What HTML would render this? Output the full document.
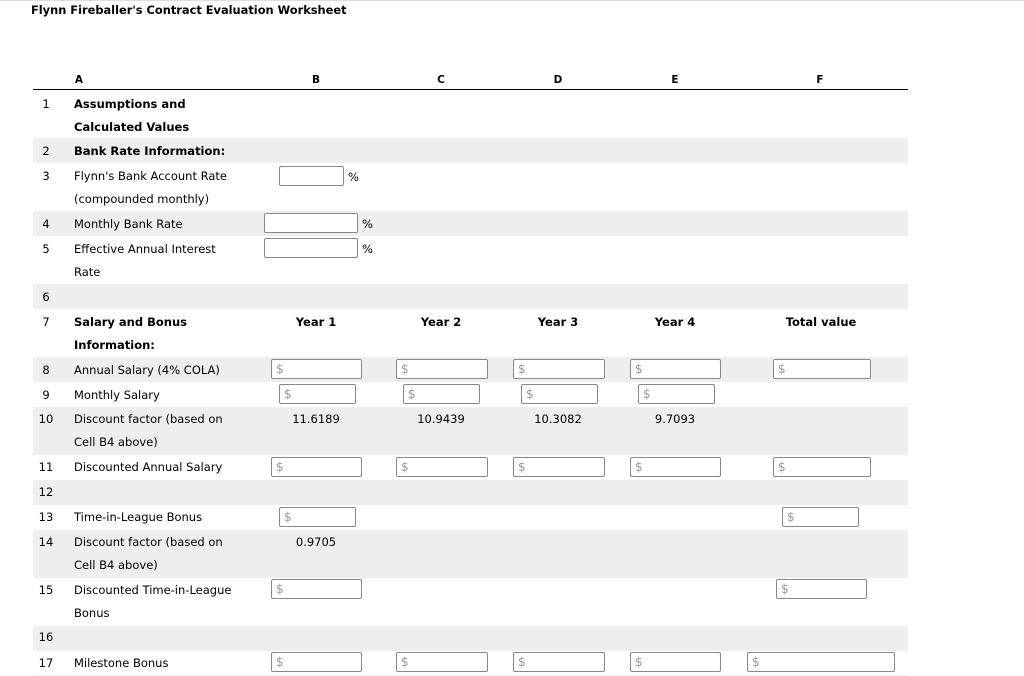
<!DOCTYPE html>
<html><head><meta charset="utf-8"><style>
*{margin:0;padding:0;box-sizing:border-box}
body{width:1024px;height:676px;background:#fff;position:relative;overflow:hidden;font-family:"DejaVu Sans","Liberation Sans",sans-serif;font-size:11.5px;color:#000}
.a{position:absolute;white-space:nowrap;line-height:14px;margin-top:1px}
.b{font-weight:bold}
.g{position:absolute;left:33px;width:875px;background:#eee}
.in{position:absolute;height:20px;border:1px solid #888;border-radius:2px;background:#fff;color:#999;font-size:12px;line-height:18px;padding-left:4px}
.c{text-align:center;transform:translateX(-50%)}
.h{font-size:10.5px}
</style></head><body>
<div style="position:absolute;left:0;top:0;width:1024px;height:1px;background:#ddd"></div>
<div class="a b" style="left:31px;top:2px;font-size:11.4px">Flynn Fireballer's Contract Evaluation Worksheet</div>

<div class="a b c h" style="left:79px;top:72px">A</div>
<div class="a b c h" style="left:316px;top:72px">B</div>
<div class="a b c h" style="left:441px;top:72px">C</div>
<div class="a b c h" style="left:558px;top:72px">D</div>
<div class="a b c h" style="left:675px;top:72px">E</div>
<div class="a b c h" style="left:820px;top:72px">F</div>
<div style="position:absolute;left:33px;top:89px;width:875px;height:1px;background:#000"></div>

<div class="g" style="top:138px;height:25px"></div>
<div class="g" style="top:211px;height:25px"></div>
<div class="g" style="top:284px;height:25px"></div>
<div class="g" style="top:357px;height:25px"></div>
<div class="g" style="top:407px;height:48px"></div>
<div class="g" style="top:480px;height:25px"></div>
<div class="g" style="top:530px;height:48px"></div>
<div class="g" style="top:626px;height:25px"></div>

<div class="a c" style="left:46px;top:96px">1</div>
<div class="a b" style="left:74px;top:96px">Assumptions and</div>
<div class="a b" style="left:74px;top:119px">Calculated Values</div>
<div class="a c" style="left:46px;top:143px">2</div>
<div class="a b" style="left:74px;top:143px">Bank Rate Information:</div>
<div class="a c" style="left:46px;top:168px">3</div>
<div class="a" style="left:74px;top:168px">Flynn's Bank Account Rate</div>
<div class="a" style="left:74px;top:191px">(compounded monthly)</div>
<div class="in" style="left:279px;top:166px;width:65px"></div><div class="a" style="left:348px;top:169px">%</div>
<div class="a c" style="left:46px;top:216px">4</div>
<div class="a" style="left:74px;top:216px">Monthly Bank Rate</div>
<div class="in" style="left:264px;top:213px;width:94px"></div><div class="a" style="left:362px;top:216px">%</div>
<div class="a c" style="left:46px;top:241px">5</div>
<div class="a" style="left:74px;top:241px">Effective Annual Interest</div>
<div class="a" style="left:74px;top:264px">Rate</div>
<div class="in" style="left:264px;top:238px;width:94px"></div><div class="a" style="left:362px;top:241px">%</div>
<div class="a c" style="left:46px;top:289px">6</div>
<div class="a c" style="left:46px;top:314px">7</div>
<div class="a b" style="left:74px;top:314px">Salary and Bonus</div>
<div class="a b" style="left:74px;top:337px">Information:</div>
<div class="a b c" style="left:316px;top:314px">Year 1</div>
<div class="a b c" style="left:441px;top:314px">Year 2</div>
<div class="a b c" style="left:558px;top:314px">Year 3</div>
<div class="a b c" style="left:675px;top:314px">Year 4</div>
<div class="a b c" style="left:821px;top:314px">Total value</div>

<div class="a c" style="left:46px;top:362px">8</div>
<div class="a" style="left:74px;top:362px">Annual Salary (4% COLA)</div>
<div class="in" style="left:271px;top:359px;width:91px">$</div>
<div class="in" style="left:396px;top:359px;width:92px">$</div>
<div class="in" style="left:513px;top:359px;width:92px">$</div>
<div class="in" style="left:630px;top:359px;width:91px">$</div>
<div class="in" style="left:773px;top:359px;width:98px">$</div>

<div class="a c" style="left:46px;top:387px">9</div>
<div class="a" style="left:74px;top:387px">Monthly Salary</div>
<div class="in" style="left:279px;top:384px;width:77px">$</div>
<div class="in" style="left:403px;top:384px;width:77px">$</div>
<div class="in" style="left:521px;top:384px;width:77px">$</div>
<div class="in" style="left:638px;top:384px;width:77px">$</div>

<div class="a c" style="left:46px;top:411px">10</div>
<div class="a" style="left:74px;top:411px">Discount factor (based on</div>
<div class="a" style="left:74px;top:434px">Cell B4 above)</div>
<div class="a c" style="left:316px;top:411px">11.6189</div>
<div class="a c" style="left:441px;top:411px">10.9439</div>
<div class="a c" style="left:558px;top:411px">10.3082</div>
<div class="a c" style="left:675px;top:411px">9.7093</div>

<div class="a c" style="left:46px;top:459px">11</div>
<div class="a" style="left:74px;top:459px">Discounted Annual Salary</div>
<div class="in" style="left:271px;top:457px;width:91px">$</div>
<div class="in" style="left:396px;top:457px;width:92px">$</div>
<div class="in" style="left:513px;top:457px;width:92px">$</div>
<div class="in" style="left:630px;top:457px;width:91px">$</div>
<div class="in" style="left:773px;top:457px;width:98px">$</div>

<div class="a c" style="left:46px;top:484px">12</div>
<div class="a c" style="left:46px;top:509px">13</div>
<div class="a" style="left:74px;top:509px">Time-in-League Bonus</div>
<div class="in" style="left:279px;top:507px;width:77px">$</div>
<div class="in" style="left:782px;top:507px;width:77px">$</div>

<div class="a c" style="left:46px;top:534px">14</div>
<div class="a" style="left:74px;top:534px">Discount factor (based on</div>
<div class="a" style="left:74px;top:557px">Cell B4 above)</div>
<div class="a c" style="left:316px;top:534px">0.9705</div>

<div class="a c" style="left:46px;top:582px">15</div>
<div class="a" style="left:74px;top:582px">Discounted Time-in-League</div>
<div class="a" style="left:74px;top:605px">Bonus</div>
<div class="in" style="left:271px;top:579px;width:91px">$</div>
<div class="in" style="left:776px;top:579px;width:91px">$</div>

<div class="a c" style="left:46px;top:629px">16</div>
<div class="a c" style="left:46px;top:655px">17</div>
<div class="a" style="left:74px;top:655px">Milestone Bonus</div>
<div class="in" style="left:271px;top:652px;width:91px">$</div>
<div class="in" style="left:396px;top:652px;width:92px">$</div>
<div class="in" style="left:513px;top:652px;width:92px">$</div>
<div class="in" style="left:630px;top:652px;width:91px">$</div>
<div class="in" style="left:747px;top:652px;width:148px">$</div>
<div style="position:absolute;left:33px;top:675px;width:875px;height:1px;background:#eee"></div>
</body></html>
